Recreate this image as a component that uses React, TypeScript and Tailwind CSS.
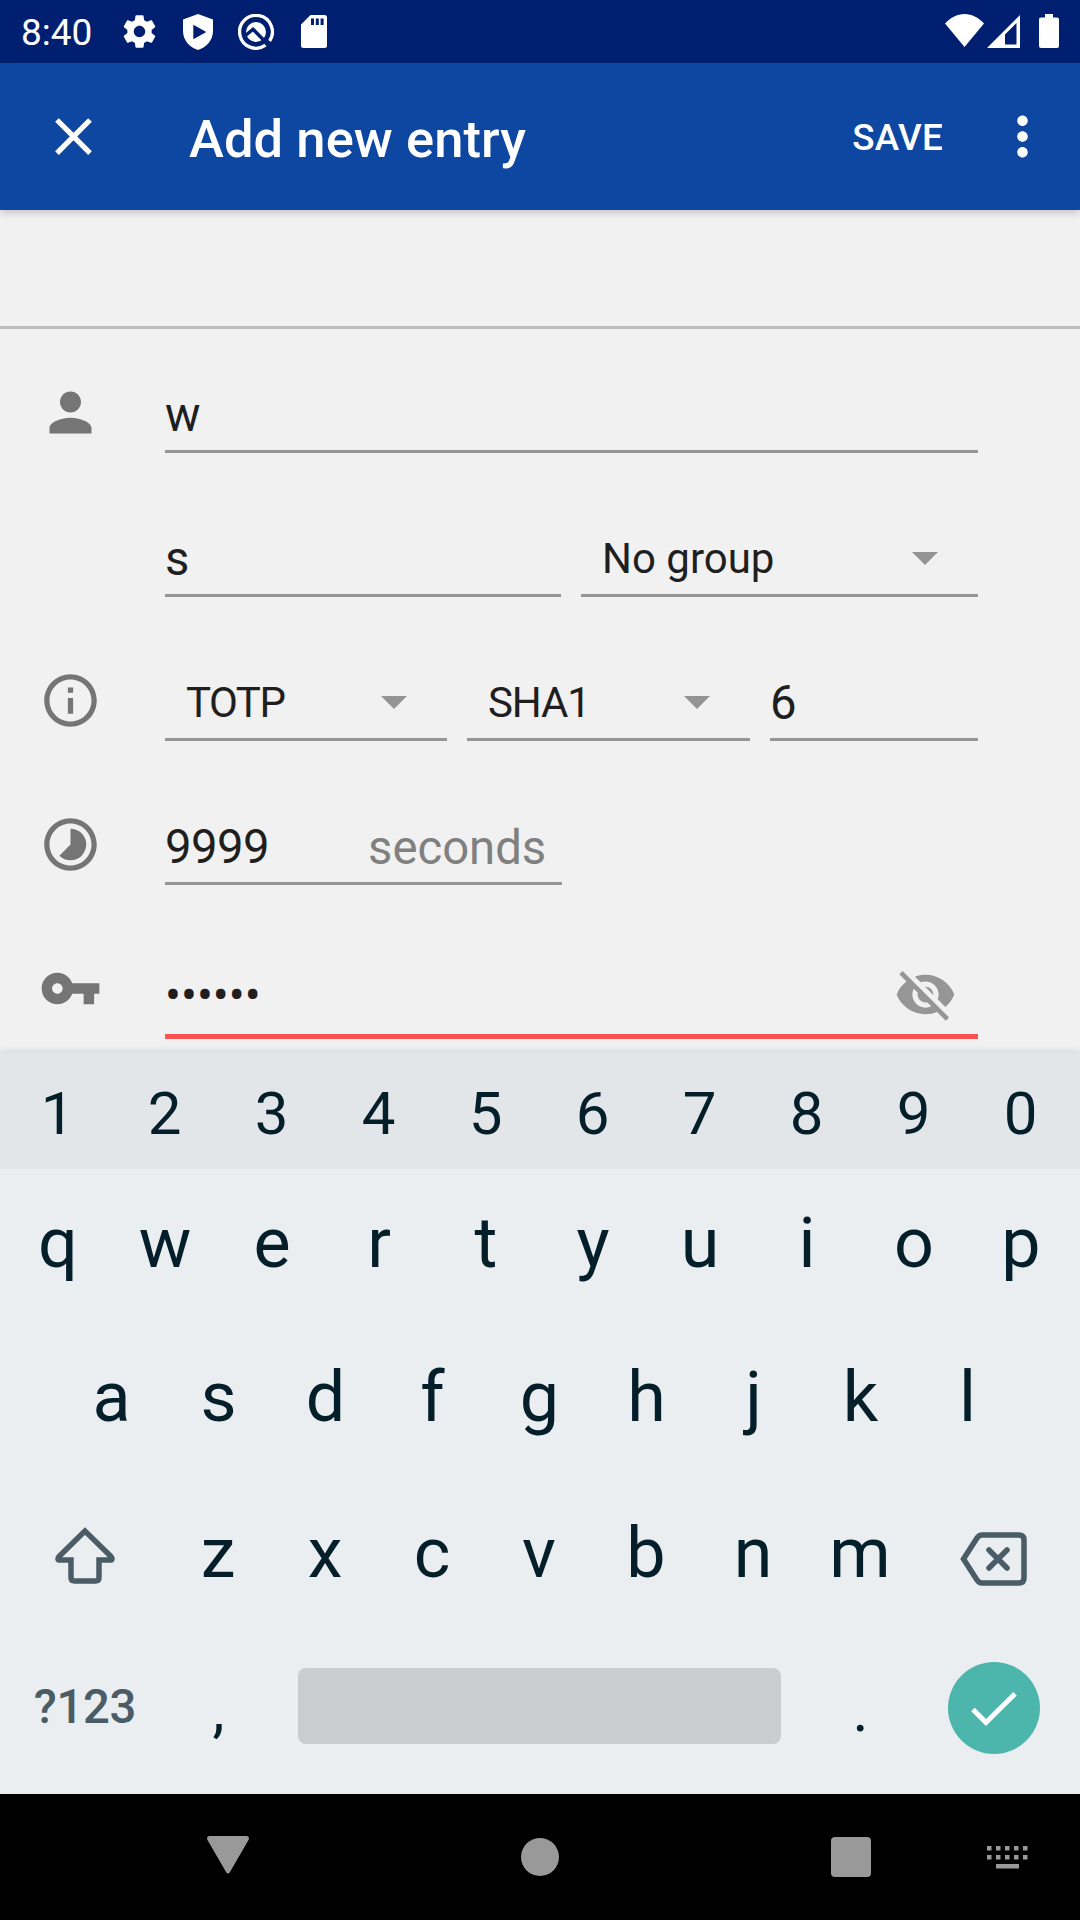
import React from "react";

type IconProps = { d: string; size: string; className?: string };

function Icon({ d, size, className = "" }: IconProps) {
  return (
    <svg viewBox="0 0 24 24" fill="currentColor" className={`shrink-0 ${size} ${className}`}>
      <path d={d} fillRule="evenodd" />
    </svg>
  );
}

const GEAR =
  "M19.43 12.98c.04-.32.07-.64.07-.98s-.03-.66-.07-.98l2.11-1.65c.19-.15.24-.42.12-.64l-2-3.46c-.12-.22-.39-.3-.61-.22l-2.49 1c-.52-.4-1.08-.73-1.69-.98l-.38-2.65C14.46 2.18 14.25 2 14 2h-4c-.25 0-.46.18-.49.42l-.38 2.65c-.61.25-1.17.59-1.69.98l-2.49-1c-.23-.09-.49 0-.61.22l-2 3.46c-.13.22-.07.49.12.64l2.11 1.65c-.04.32-.07.65-.07.98s.03.66.07.98l-2.11 1.65c-.19.15-.24.42-.12.64l2 3.46c.12.22.39.3.61.22l2.49-1c.52.4 1.08.73 1.69.98l.38 2.65c.03.24.24.42.49.42h4c.25 0 .46-.18.49-.42l.38-2.65c.61-.25 1.17-.59 1.69-.98l2.49 1c.23.09.49 0 .61-.22l2-3.46c.12-.22.07-.49-.12-.64l-2.11-1.65zM12 15.5c-1.93 0-3.5-1.57-3.5-3.5s1.57-3.5 3.5-3.5 3.5 1.57 3.5 3.5-1.57 3.5-3.5 3.5z";
const CLOSE =
  "M19 6.41L17.59 5 12 10.59 6.41 5 5 6.41 10.59 12 5 17.59 6.41 19 12 13.41 17.59 19 19 17.59 13.41 12z";
const MORE =
  "M12 8c1.1 0 2-.9 2-2s-.9-2-2-2-2 .9-2 2 .9 2 2 2zm0 2c-1.1 0-2 .9-2 2s.9 2 2 2 2-.9 2-2-.9-2-2-2zm0 6c-1.1 0-2 .9-2 2s.9 2 2 2 2-.9 2-2-.9-2-2-2z";
const PERSON =
  "M12 12c2.21 0 4-1.79 4-4s-1.79-4-4-4-4 1.79-4 4 1.79 4 4 4zm0 2c-2.67 0-8 1.34-8 4v2h16v-2c0-2.66-5.33-4-8-4z";
const INFO =
  "M11 7h2v2h-2zm0 4h2v6h-2zm1-9C6.48 2 2 6.48 2 12s4.48 10 10 10 10-4.48 10-10S17.52 2 12 2zm0 18c-4.41 0-8-3.59-8-8s3.59-8 8-8 8 3.59 8 8-3.59 8-8 8z";
const TIMELAPSE =
  "M16.24 7.76C15.07 6.59 13.54 6 12 6v6l-4.24 4.24c2.34 2.34 6.14 2.34 8.49 0 2.34-2.34 2.34-6.14-.01-8.48zM12 2C6.48 2 2 6.48 2 12s4.48 10 10 10 10-4.48 10-10S17.52 2 12 2zm0 18c-4.42 0-8-3.58-8-8s3.58-8 8-8 8 3.58 8 8-3.58 8-8 8z";
const KEY =
  "M12.65 10C11.83 7.67 9.61 6 7 6c-3.31 0-6 2.69-6 6s2.69 6 6 6c2.61 0 4.83-1.67 5.65-4H17v4h4v-4h2v-4H12.65zM7 14c-1.1 0-2-.9-2-2s.9-2 2-2 2 .9 2 2-.9 2-2 2z";
const EYE_OFF =
  "M12 7c2.76 0 5 2.24 5 5 0 .65-.13 1.26-.36 1.83l2.92 2.92c1.51-1.26 2.7-2.89 3.43-4.75-1.73-4.39-6-7.5-11-7.5-1.4 0-2.74.25-3.98.7l2.16 2.16C10.74 7.13 11.35 7 12 7zM2 4.27l2.28 2.28.46.46C3.08 8.3 1.78 10.02 1 12c1.73 4.39 6 7.5 11 7.5 1.55 0 3.03-.3 4.38-.84l.42.42L19.73 22 21 20.73 3.27 3 2 4.27zM7.53 9.8l1.55 1.55c-.05.21-.08.43-.08.65 0 1.66 1.34 3 3 3 .22 0 .44-.03.65-.08l1.55 1.55c-.67.33-1.41.53-2.2.53-2.76 0-5-2.24-5-5 0-.79.2-1.53.53-2.2zm4.31-.78l3.15 3.15.02-.16c0-1.66-1.34-3-3-3l-.17.01z";

function StatusBar() {
  return (
    <header className="flex h-[63px] items-center bg-[#001f70] text-white">
      <span className="mt-[2px] ml-[21px] w-[99px] text-[37px] leading-[63px]">8:40</span>
      <Icon d={GEAR} size="size-[39px]" />
      <svg viewBox="0 0 30 36" className="ml-[24px] h-[36px] w-[30px]" fill="white">
        <path fillRule="evenodd" d="M15 0 30 5.500V17c0 9-6.500 16.500-15 19C6.500 33.500 0 26 0 17V5.500ZM10.300 10.700v14.600l13-7.300Z" />
      </svg>
      <svg viewBox="0 0 36 36" className="ml-[25px] size-[36px]" fill="none">
        <path d="M27.500 31.200A16.400 16.400 0 1 1 31.600 27" stroke="white" strokeWidth="3.300" />
        <circle cx="18" cy="18" r="10" fill="white" />
        <path d="M7.500 21.500 15 15.200 31 31.500" stroke="#001f70" strokeWidth="3.400" />
      </svg>
      <svg viewBox="0 0 26 33" className="ml-[27px] h-[33px] w-[26px]" fill="white">
        <path fillRule="evenodd" d="M9.500 0H23.500a2.500 2.500 0 0 1 2.500 2.500v28a2.500 2.500 0 0 1-2.500 2.500H2.500A2.500 2.500 0 0 1 0 30.500V9.500ZM10 3.500v6.500h3V3.500Zm4.800 0v6.500h3V3.500Zm4.800 0v6.500h3V3.500Z" />
      </svg>
      <div className="flex-1" />
      <svg viewBox="0 0 39 33" className="-mt-[2px] h-[33px] w-[39px]" fill="white">
        <path d="M19.500 33 0 9.500C5 4 12 0 19.500 0S34 4 39 9.500Z" />
      </svg>
      <svg viewBox="0 0 33 33" className="-mt-px ml-[3px] size-[33px]" fill="white">
        <path fillRule="evenodd" d="M0 33 33 0V33ZM18 19.500V29.500H29.500V8Z" />
      </svg>
      <svg viewBox="0 0 20 34" className="-mt-px mr-[21px] ml-[19px] h-[34px] w-[20px]" fill="white">
        <path d="M6 0h8v3.500h4a2 2 0 0 1 2 2V32a2 2 0 0 1-2 2H2a2 2 0 0 1-2-2V5.500a2 2 0 0 1 2-2h4Z" />
      </svg>
    </header>
  );
}

function AppBar() {
  return (
    <div className="relative z-10 flex h-[147px] items-center bg-[#0d47a1] font-medium text-white shadow-[0_2px_8px_rgba(0,0,0,0.22)]">
      <Icon d={CLOSE} size="size-[63px]" className="ml-[42px]" />
      <h1 className="mt-[4px] ml-[84px] flex-1 text-[52.500px] leading-[60px] tracking-[0.08px]">Add new entry</h1>
      <span className="mt-[2px] mr-[48px] text-[36.750px] leading-[44px] tracking-[0.3px]">SAVE</span>
      <Icon d={MORE} size="size-[63px]" className="mr-[26px]" />
    </div>
  );
}

function Row({ icon, children, height = "h-[144px]" }: { icon?: React.ReactNode; children: React.ReactNode; height?: string }) {
  return (
    <div className={`flex items-end pr-[102px] ${height}`}>
      <div className="flex w-[165px] shrink-0 pl-[39px]">{icon}</div>
      <div className="flex flex-1 gap-[20px]">{children}</div>
    </div>
  );
}

function Field({ width, children }: { width: string; children: React.ReactNode }) {
  return (
    <div className={`flex border-b-[3px] border-[#969696] pb-[5px] text-[47.250px] leading-[60px] ${width}`}>{children}</div>
  );
}

function Spinner({ width, label, tracking = "" }: { width: string; label: string; tracking?: string }) {
  return (
    <div className={`flex items-center justify-between border-b-[3px] border-[#969696] pr-[40px] pb-[5px] pl-[21px] text-[42px] leading-[60px] ${width}`}>
      <span className={tracking}>{label}</span>
      <svg viewBox="0 0 26 13" className="-mt-px h-[13px] w-[26px]" fill="#949494">
        <path d="M0 0H26L13 13Z" />
      </svg>
    </div>
  );
}

function Key({ children }: { children: React.ReactNode }) {
  return <span className="w-[107px] text-center">{children}</span>;
}

function Letters({ keys }: { keys: string }) {
  return (
    <>
      {keys.split("").map((k) => (
        <Key key={k}>{k}</Key>
      ))}
    </>
  );
}

function Keyboard() {
  return (
    <section className="relative h-[742px] bg-[#eaeef1] text-[#041e2a] shadow-[0_-1px_6px_rgba(0,0,0,0.12)]">
      <div className="flex h-[117px] justify-center bg-[#e2e6e9] pt-[3px] pr-[2px] text-[60px] leading-[117px]">
        <Letters keys="1234567890" />
      </div>
      <div className="flex h-[154px] justify-center pr-px text-[70px] leading-[149px]">
        <Letters keys="qwertyuiop" />
      </div>
      <div className="flex h-[155px] justify-center pr-px text-[70px] leading-[149px]">
        <Letters keys="asdfghjkl" />
      </div>
      <div className="flex h-[155px] justify-center pr-[2px] text-[70px] leading-[150px]">
        <span className="flex w-[160px] justify-center">
          <svg viewBox="0 0 60 58" className="mt-[49px] h-[58px] w-[60px]" fill="none" stroke="#4a5c65" strokeWidth="5.500">
            <path d="M30 4 4 29.500Q1.500 33 5 33H16V50.500Q16 54 19.500 54H40.500Q44 54 44 50.500V33H55Q58.500 33 56 29.500Z" />
          </svg>
        </span>
        <Letters keys="zxcvbnm" />
        <span className="flex w-[160px] justify-center">
          <svg viewBox="0 0 68 54" className="mt-[54px] h-[54px] w-[68px]" fill="none" stroke="#4a5c65" strokeWidth="5.500">
            <path d="M3.500 27 17 6Q19 3 22 3H59Q64 3 64 8V46Q64 51 59 51H22Q19 51 17 48Z" />
            <path d="M29 18 47 36M47 18 29 36" strokeLinecap="round" />
          </svg>
        </span>
      </div>
      <div className="flex h-[161px] justify-center pr-[2px] text-[61px]">
        <span className="w-[160px] pt-[39px] text-center text-[47.250px] leading-[70px] font-medium tracking-[-0.3px] text-[#4a5c65]">?123</span>
        <span className="w-[107px] pt-[32px] text-center leading-[90px]">,</span>
        <span className="mx-[26px] mt-[35px] h-[76px] w-[483px] rounded-[8px] bg-[#c9cdd0]" />
        <span className="w-[107px] pt-[32px] text-center leading-[90px]">.</span>
        <span className="mt-[29px] mr-[33px] ml-[34px] flex size-[92px] items-center justify-center rounded-full bg-[#4db6ac]">
          <svg viewBox="0 0 46 35" className="mt-[2px] h-[35px] w-[46px]" fill="none" stroke="white" strokeWidth="5">
            <path d="M2 17.500 15 30.500 44 1.800" />
          </svg>
        </span>
      </div>
    </section>
  );
}

const KEY_COLUMNS = [0, 1, 2, 3, 4];

function NavBar() {
  return (
    <nav className="flex h-[126px] items-center bg-black">
      <svg viewBox="0 0 42 38" className="-mt-[5px] ml-[207px] h-[38px] w-[42px]" fill="#999999">
        <path d="M2 0H40Q43 1 41.500 4L23 36Q21 39 19 36L.5 4Q-1 1 2 0Z" />
      </svg>
      <span className="ml-[272px] size-[38px] rounded-full bg-[#999999]" />
      <span className="ml-[272px] size-[40px] rounded-[4px] bg-[#999999]" />
      <svg viewBox="0 0 41 23" className="ml-[116px] h-[23px] w-[41px]" fill="#999999">
        {KEY_COLUMNS.map((c) => (
          <g key={c}>
            <rect x={c * 9} width="4.500" height="4.500" />
            <rect x={c * 9} y="9" width="4.500" height="4.500" />
          </g>
        ))}
        <rect x="9" y="18" width="23" height="4.500" />
      </svg>
    </nav>
  );
}

export default function App() {
  return (
    <div className="flex h-[1920px] w-[1080px] flex-col overflow-hidden bg-[#f1f1f1] font-['Roboto',sans-serif] text-[#1f1f1f]">
      <StatusBar />
      <AppBar />
      <main className="flex h-[842px] flex-col">
        <div className="h-[119px] shrink-0 border-b-[3px] border-[#bdbdbd]" />
        <Row height="h-[124px]" icon={<Icon d={PERSON} size="size-[63px]" className="mb-[9px] text-[#757575]" />}>
          <Field width="flex-1">w</Field>
        </Row>
        <Row>
          <Field width="w-[396px]">s</Field>
          <Spinner width="flex-1" label="No group" />
        </Row>
        <Row icon={<Icon d={INFO} size="size-[63px]" className="mb-[9px] text-[#757575]" />}>
          <Spinner width="w-[282px]" label="TOTP" tracking="tracking-[-1.500px]" />
          <Spinner width="w-[283px]" label="SHA1" tracking="tracking-[-1.100px]" />
          <Field width="flex-1">6</Field>
        </Row>
        <Row icon={<Icon d={TIMELAPSE} size="size-[63px]" className="mb-[9px] text-[#757575]" />}>
          <Field width="w-[397px]">
            <span className="w-[203px] tracking-[-0.540px]">9999</span>
            <span className="-mb-px pt-px text-[#808080]">seconds</span>
          </Field>
        </Row>
        <Row height="h-[154px]" icon={<Icon d={KEY} size="size-[63px]" className="mb-[19px] text-[#757575]" />}>
          <div className="flex flex-1 items-center justify-between border-b-[5px] border-[#ff5252] pr-[21px] pb-[8px] text-[47.250px] leading-[62px]">
            <span className="-mb-px pt-[3px]">••••••</span>
            <Icon d={EYE_OFF} size="size-[63px]" className="text-[#969696]" />
          </div>
        </Row>
      </main>
      <Keyboard />
      <NavBar />
    </div>
  );
}
